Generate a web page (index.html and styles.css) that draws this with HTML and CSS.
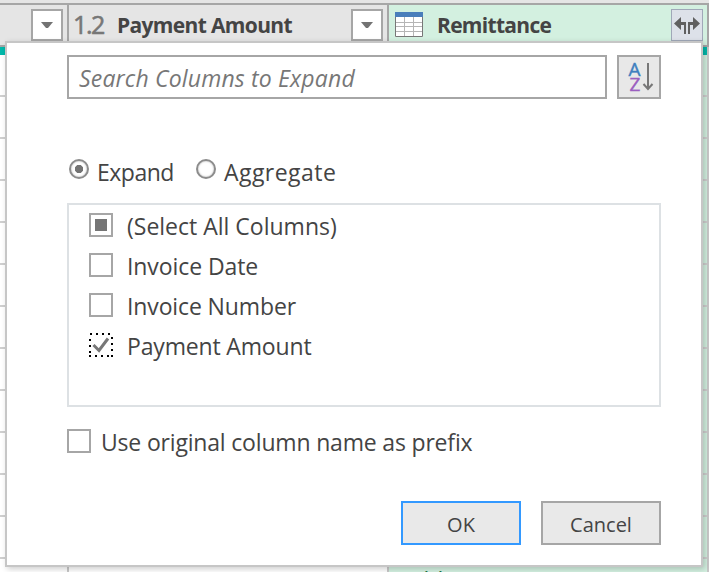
FILE: index.html
```html
<!DOCTYPE html>
<html lang="en">
<head>
<meta charset="utf-8">
<title>Expand Columns</title>
<link rel="stylesheet" href="styles.css">
</head>
<body>
<div class="grid">
  <div class="col col-first">
    <div class="head"><span class="filter"><svg width="12" height="6" viewBox="0 0 12 6"><path d="M0 0H12L7 6H5Z"/></svg></span></div>
    <div class="bar"></div><div class="cells"></div>
  </div>
  <div class="col col-amount">
    <div class="head"><span class="type">1.2</span><span class="title t-amount">Payment Amount</span><span class="filter"><svg width="12" height="6" viewBox="0 0 12 6"><path d="M0 0H12L7 6H5Z"/></svg></span></div>
    <div class="bar"></div><div class="cells"></div>
  </div>
  <div class="col col-remit">
    <div class="head">
      <svg class="table-icon" width="28" height="25" viewBox="0 0 28 25"><path fill="#fff" d="M0 0H28V25H0Z"/><path d="M1 10.5H27M1 14.5H27M1 19.5H27M9.500 5V24M18.500 5V24" stroke="#b5b5b5" fill="none"/><path d="M.5 4V24.500H27.500V4" stroke="#777" fill="none"/><path fill="#4a7ebb" d="M0 0H28V5H0Z"/></svg>
      <span class="title t-remit">Remittance</span>
      <span class="expand"><svg width="28" height="20" viewBox="0 0 28 20"><path fill="#606060" d="M1 6.500L8 0V5H13V17H11V8H8V13ZM27 6.500L20 0V5H15V17H17V8H20V13Z"/></svg></span>
    </div>
    <div class="bar"></div><div class="cells"><span class="value">Table</span></div>
  </div>
</div>
<form class="dialog">
  <div class="search-row">
    <div class="search"><span class="t-search">Search Columns to Expand</span></div>
    <div class="sort"><svg width="40" height="40" viewBox="0 0 40 40"><text class="az a" x="9.500" y="19">A</text><text class="az z" x="10.500" y="34">Z</text><path d="M29 6V32M24.500 27L29 32L33.500 27" fill="none" stroke="#777" stroke-width="2"/></svg></div>
  </div>
  <div class="modes">
    <span class="radio on"></span><span class="label t-expand">Expand</span>
    <span class="radio"></span><span class="label t-aggregate">Aggregate</span>
  </div>
  <div class="list">
    <div class="item"><span class="box some"></span><span class="label t-all">(Select All Columns)</span></div>
    <div class="item"><span class="box"></span><span class="label t-date">Invoice Date</span></div>
    <div class="item"><span class="box"></span><span class="label t-number">Invoice Number</span></div>
    <div class="item"><svg class="focus" width="24" height="24" viewBox="0 0 24 24"><path d="M1 1H24M6 23H24M1 6V22M23 4V24M0 23H2" fill="none" stroke="#000" stroke-width="2" stroke-dasharray="2 4"/><path d="M4.500 12L10 17.500L19 5.500" fill="none" stroke="#777" stroke-width="3"/></svg><span class="label t-pay">Payment Amount</span></div>
  </div>
  <div class="prefix"><span class="box"></span><span class="label t-prefix">Use original column name as prefix</span></div>
  <div class="actions"><span class="button primary"><span class="t-ok">OK</span></span><span class="button"><span class="t-cancel">Cancel</span></span></div>
</form>
</body>
</html>
```
FILE: styles.css
```css
* { box-sizing: border-box; }
body {
  margin: 0;
  width: 709px;
  height: 572px;
  overflow: hidden;
  position: relative;
  background: #e5e5e5;
  font-family: "Open Sans", "Noto Sans", sans-serif;
  font-size: 23px;
  color: #444;
  white-space: nowrap;
}
svg { display: block; flex: none; }
.grid { display: flex; height: 572px; padding-top: 3px; }
.col { display: flex; flex-direction: column; flex: none; border-right: 2px solid #c8c8c8; }
.col-first { width: 69px; }
.col-amount, .col-remit { width: 320px; }
.head {
  height: 44px;
  flex: none;
  display: flex;
  align-items: flex-start;
  border-top: 2px solid #a6a6a6;
  border-bottom: 2px solid #a6a6a6;
  background: #e5e5e5;
  padding: 4px 4px 0;
  margin-right: -2px;
  border-right: 2px solid #a6a6a6;
}
.filter {
  width: 32px;
  height: 32px;
  margin-left: auto;
  border: 2px solid #a6a6a6;
  background: #fff;
  display: flex;
  align-items: center;
  justify-content: center;
  fill: #737373;
}
.bar { height: 8px; flex: none; background: #01b8aa; }
.cells {
  flex: 1;
  background: repeating-linear-gradient(#fff 0 40px, #cfcfcf 40px 42px);
}
.type { width: 44px; font-size: 25px; line-height: 31px; color: #777; letter-spacing: -1.4px; -webkit-text-stroke: .6px #777; }
.title { font-size: 21px; line-height: 33px; font-weight: 700; }
.t-amount { letter-spacing: -.65px; }
.t-remit { letter-spacing: -.7px; }
.col-remit .head { background: #d3f0e0; padding-left: 6px; }
.col-remit .cells { background: repeating-linear-gradient(#d3f0e0 0 40px, #cfcfcf 40px 42px); padding: 506px 0 0 9px; height: 517px; overflow: hidden; }
.value { color: #217346; line-height: 38px; display: block; }
.table-icon { margin: 3px 14px 0 0; }
.expand {
  width: 32px;
  height: 32px;
  margin-left: auto;
  border: 1px solid #a0a8b8;
  background: #dde1e9;
  padding: 7px 1px;
}
.dialog {
  position: absolute;
  left: 5px;
  top: 41px;
  width: 698px;
  height: 526px;
  border: 2px solid #c6c6c6;
  background: #fff;
  padding: 12px 40px 0 60px;
  box-shadow: 2px 2px 6px rgba(0, 0, 0, .2);
}
.search-row { display: flex; gap: 10px; height: 44px; }
.search {
  width: 540px;
  border: 2px solid #a6a6a6;
  padding-left: 10px;
  font-style: italic;
  color: #777;
  line-height: 43px;
  letter-spacing: .17px;
}
.sort { width: 44px; border: 2px solid #a6a6a6; background: #e8e8e8; }
.az { font-size: 19px; }
.a { fill: #3f7fbf; stroke: #3f7fbf; stroke-width: .4; }
.z { fill: #9b5fc0; stroke: #9b5fc0; stroke-width: .4; }
.modes { display: flex; height: 40px; margin-top: 54px; padding-left: 2px; }
.radio {
  width: 20px;
  height: 20px;
  flex: none;
  margin-top: 6px;
  border: 2px solid #8c8c8c;
  border-radius: 50%;
  background: #fff;
  box-shadow: inset 0 0 2px #aaa;
}
.on { background: radial-gradient(circle, #737373 0 3.8px, #fff 4.5px); }
.label { line-height: 38px; }
.modes .label { width: 99px; margin-left: 8px; flex: none; }
.t-expand { letter-spacing: -.5px; }
.t-aggregate { letter-spacing: .45px; }
.t-date { letter-spacing: -.08px; }
.t-number { letter-spacing: -.12px; }
.t-pay { letter-spacing: -.16px; }
.t-prefix { letter-spacing: -.18px; }
.list {
  width: 594px;
  height: 204px;
  margin-top: 10px;
  border: 2px solid #dde1e4;
  padding-left: 20px;
}
.item { display: flex; height: 40px; padding-top: 8px; gap: 14px; }
.item .label { line-height: 27px; }
.box { width: 24px; height: 24px; flex: none; border: 2px solid #a6a6a6; background: #fff; }
.some { padding: 4px; background: #757575; background-clip: content-box; }
.prefix { display: flex; height: 40px; margin-top: 22px; gap: 10px; }
.prefix .label { line-height: 27px; }
.actions { display: flex; justify-content: flex-end; gap: 20px; height: 44px; margin-top: 32px; font-size: 20px; }
.button { width: 120px; border: 2px solid #a6a6a6; background: #e9e9e9; text-align: center; line-height: 43px; }
.primary { border-color: #3399ff; }
```
